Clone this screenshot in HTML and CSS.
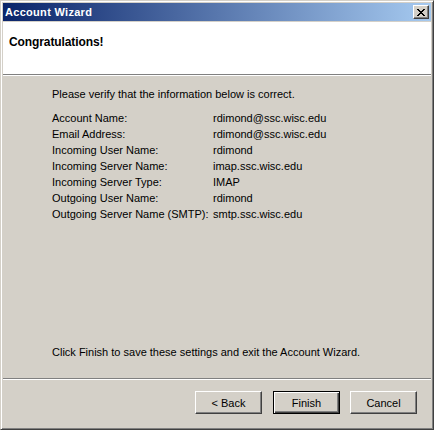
FILE: index.html
```html
<!DOCTYPE html>
<html>
<head>
<meta charset="utf-8">
<link rel="stylesheet" href="styles.css">
</head>
<body>
<div class="window">
  <div class="titlebar">
    <span class="title">Account Wizard</span>
    <span class="close">
      <svg width="8" height="7" viewBox="0 0 8 7"><path d="M0 0h2v1h1v1h2v-1h1v-1h2v1h-1v1h-1v1h-1v1h1v1h1v1h1v1h-2v-1h-1v-1h-2v1h-1v1h-2v-1h1v-1h1v-1h1v-1h-1v-1h-1v-1h-1z" fill="#000"/></svg>
    </span>
  </div>
  <div class="header">
    <div class="heading">Congratulations!</div>
  </div>
  <div class="sep"></div>
  <div class="body">
    <p class="intro">Please verify that the information below is correct.</p>
    <div class="info">
      <span>Account Name:</span><span>rdimond@ssc.wisc.edu</span>
      <span>Email Address:</span><span>rdimond@ssc.wisc.edu</span>
      <span>Incoming User Name:</span><span>rdimond</span>
      <span>Incoming Server Name:</span><span>imap.ssc.wisc.edu</span>
      <span>Incoming Server Type:</span><span>IMAP</span>
      <span>Outgoing User Name:</span><span>rdimond</span>
      <span>Outgoing Server Name (SMTP):</span><span>smtp.ssc.wisc.edu</span>
    </div>
    <p class="outro">Click Finish to save these settings and exit the Account Wizard.</p>
  </div>
  <div class="sep"></div>
  <div class="buttons">
    <button class="btn back">&lt; Back</button>
    <button class="btn default">Finish</button>
    <button class="btn">Cancel</button>
  </div>
</div>
</body>
</html>
```

FILE: styles.css
```css
html, body {
  margin: 0;
  padding: 0;
  background: #d4d0c8;
}
body {
  width: 434px;
  height: 430px;
  overflow: hidden;
  font-family: "Liberation Sans", Arial, sans-serif;
  font-size: 11px;
  color: #000;
}
.window {
  box-sizing: border-box;
  width: 434px;
  height: 430px;
  border-style: solid;
  border-width: 1px;
  border-color: #d4d0c8 #404040 #404040 #d4d0c8;
  background: #d4d0c8;
  display: flex;
  flex-direction: column;
  box-shadow: inset 1px 1px 0 #fff, inset -1px -1px 0 #808080;
  padding: 2px;
}
.window > * {
  flex: none;
}
.titlebar {
  height: 18px;
  background: linear-gradient(to right, #0a246a, #a6caf0);
  display: flex;
  align-items: center;
  justify-content: space-between;
  padding: 0 2px 0 2px;
}
.title {
  color: #fff;
  font-weight: bold;
  font-size: 11px;
  letter-spacing: 0.3px;
}
.close {
  box-sizing: border-box;
  width: 16px;
  height: 14px;
  background: #d4d0c8;
  border: 1px solid;
  border-color: #fff #404040 #404040 #fff;
  box-shadow: inset -1px -1px 0 #808080;
  display: flex;
  align-items: center;
  justify-content: center;
}
.close svg { display: block; margin-left: -1px; }
.header {
  margin-top: 1px;
  height: 52px;
  background: #fff;
  box-sizing: border-box;
  padding: 13px 0 0 6px;
}
.heading {
  font-weight: bold;
  font-size: 12px;
  letter-spacing: -0.1px;
}
.sep {
  height: 1px;
  border-top: 1px solid #808080;
  background: #fff;
}
.body {
  height: 302px;
  box-sizing: border-box;
  padding: 12px 0 0 49px;
  display: flex;
  flex-direction: column;
}
.intro {
  margin: 0 0 9px 0;
  line-height: 13px;
}
.info {
  display: grid;
  grid-template-columns: 161px auto;
  grid-auto-rows: 16px;
  align-items: center;
  justify-content: start;
}
.outro {
  margin: auto 0 19px 0;
  line-height: 13px;
}
.buttons {
  display: flex;
  justify-content: flex-end;
  gap: 10px;
  padding: 11px 14px 0 0;
}
.btn {
  box-sizing: border-box;
  width: 67px;
  height: 23px;
  padding: 0;
  font-family: "Liberation Sans", Arial, sans-serif;
  font-size: 11px;
  color: #000;
  background: #d4d0c8;
  border: 1px solid;
  border-color: #fff #404040 #404040 #fff;
  box-shadow: inset -1px -1px 0 #808080;
}
.btn.default {
  border: 1px solid #000;
  box-shadow: inset 1px 1px 0 #fff, inset -1px -1px 0 #404040, inset -2px -2px 0 #808080;
}
.btn.back { margin-right: 1px; }
```
